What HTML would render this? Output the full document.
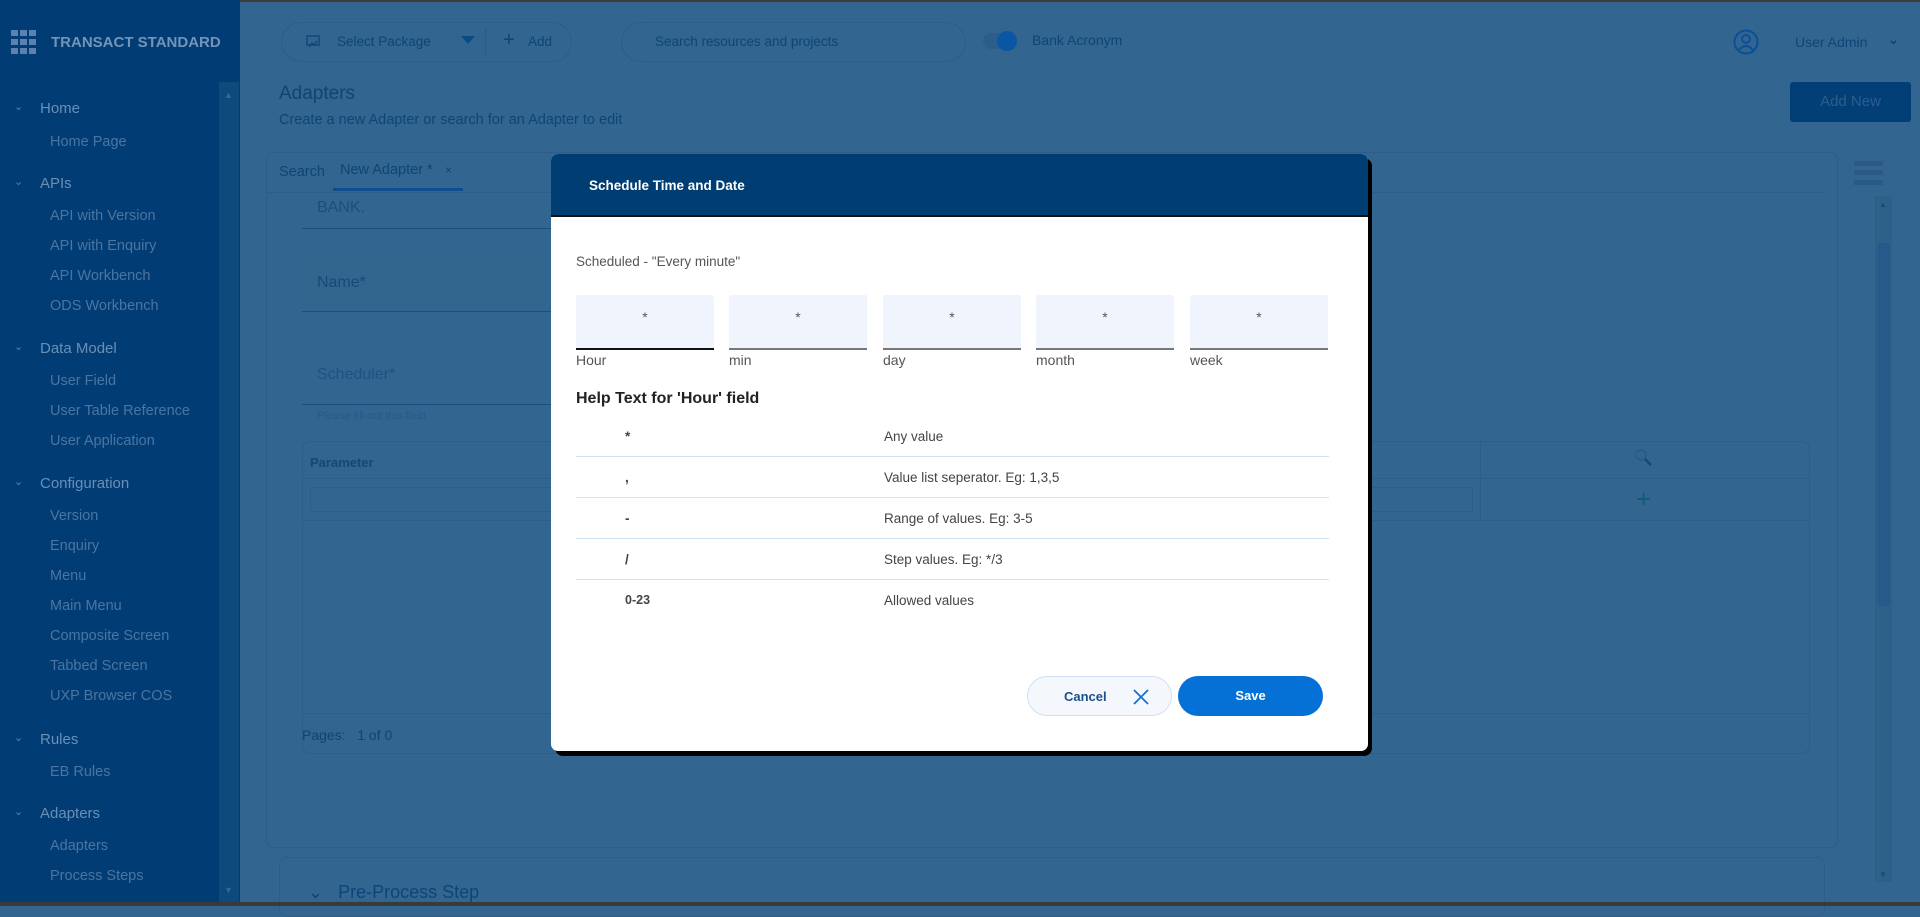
<!DOCTYPE html>
<html><head><meta charset="utf-8"><style>
*{box-sizing:border-box;margin:0;padding:0}
body{width:1920px;height:906px;overflow:hidden;background:#32658f;font-family:"Liberation Sans",sans-serif;position:relative}
.a{position:absolute;white-space:nowrap}
.sb{left:0;top:0;width:240px;height:902px;background:#013d74}
.sh{color:#6a8fb6;font-size:15px;left:40px}
.si{color:#4a75a2;font-size:14.5px;left:50px}
.chev{position:absolute;left:14px;color:#5a82ad;font-size:11px}
.dim{color:#0f4576}
.card{border:1px solid #2e5e88;border-radius:8px}
.inp{position:absolute;top:141px;width:138px;height:55px;background:#f0f5fd;border-bottom:2px solid #777;border-radius:2px 2px 0 0;text-align:center;font-size:14px;color:#555;padding-top:14px}
.lbl{position:absolute;top:198px;font-size:14px;color:#555}
.row{position:absolute;left:25px;width:753px;height:41px;border-bottom:1px solid #cfe3f5;font-size:13.5px;color:#444}
.row span{position:absolute;top:13px}
</style></head><body>
<div class="a" style="left:0;top:0;width:1920px;height:2px;background:#3d3d3d"></div>

<!-- sidebar -->
<div class="a sb"></div>
<div class="a" style="left:219px;top:82px;width:20px;height:820px;background:#0f4a7d"></div>
<div class="a" style="left:224px;top:90px;color:#3a6690;font-size:9px">▲</div>
<div class="a" style="left:224px;top:885px;color:#3a6690;font-size:9px">▼</div>
<svg class="a" style="left:11px;top:30px" width="26" height="26"><g fill="#5a82ad"><rect x="0" y="0" width="7" height="6"/><rect x="9" y="0" width="7" height="6"/><rect x="18" y="0" width="7" height="6"/><rect x="0" y="9" width="7" height="6"/><rect x="9" y="9" width="7" height="6"/><rect x="18" y="9" width="7" height="6"/><rect x="0" y="18" width="7" height="6"/><rect x="9" y="18" width="7" height="6"/><rect x="18" y="18" width="7" height="6"/></g></svg>
<div class="a" style="left:51px;top:34px;color:#7394b8;font-size:15px;font-weight:bold">TRANSACT STANDARD</div>

<div class="a sh" style="top:100px"><span class="chev" style="left:-26px">⌄</span>Home</div>
<div class="a si" style="top:134px">Home Page</div>
<div class="a sh" style="top:175px"><span class="chev" style="left:-26px">⌄</span>APIs</div>
<div class="a si" style="top:208px">API with Version</div>
<div class="a si" style="top:238px">API with Enquiry</div>
<div class="a si" style="top:268px">API Workbench</div>
<div class="a si" style="top:298px">ODS Workbench</div>
<div class="a sh" style="top:340px"><span class="chev" style="left:-26px">⌄</span>Data Model</div>
<div class="a si" style="top:373px">User Field</div>
<div class="a si" style="top:403px">User Table Reference</div>
<div class="a si" style="top:433px">User Application</div>
<div class="a sh" style="top:475px"><span class="chev" style="left:-26px">⌄</span>Configuration</div>
<div class="a si" style="top:508px">Version</div>
<div class="a si" style="top:538px">Enquiry</div>
<div class="a si" style="top:568px">Menu</div>
<div class="a si" style="top:598px">Main Menu</div>
<div class="a si" style="top:628px">Composite Screen</div>
<div class="a si" style="top:658px">Tabbed Screen</div>
<div class="a si" style="top:688px">UXP Browser COS</div>
<div class="a sh" style="top:731px"><span class="chev" style="left:-26px">⌄</span>Rules</div>
<div class="a si" style="top:764px">EB Rules</div>
<div class="a sh" style="top:805px"><span class="chev" style="left:-26px">⌄</span>Adapters</div>
<div class="a si" style="top:838px">Adapters</div>
<div class="a si" style="top:868px">Process Steps</div>

<!-- top bar -->
<div class="a card" style="left:281px;top:22px;width:291px;height:40px;border-radius:20px"></div>
<svg class="a" style="left:306px;top:35px" width="14" height="14"><rect x="1" y="1" width="12" height="9" fill="none" stroke="#14487a" stroke-width="1.5"/><path d="M3 12 L6 8 L8 10 L11 6" stroke="#14487a" fill="none" stroke-width="1.5"/></svg>
<div class="a dim" style="left:337px;top:34px;font-size:13.5px">Select Package</div>
<div class="a" style="left:461px;top:36px;width:0;height:0;border-left:7px solid transparent;border-right:7px solid transparent;border-top:8px solid #0a4a86"></div>
<div class="a" style="left:485px;top:28px;width:1px;height:28px;background:#2b5a84"></div>
<div class="a dim" style="left:503px;top:29px;font-size:20px">+</div>
<div class="a dim" style="left:528px;top:34px;font-size:13.5px">Add</div>
<div class="a card" style="left:621px;top:22px;width:345px;height:40px;border-radius:20px"></div>
<div class="a dim" style="left:655px;top:34px;font-size:13.5px">Search resources and projects</div>
<div class="a" style="left:983px;top:33px;width:32px;height:16px;border-radius:8px;background:#2c5e8a"></div>
<div class="a" style="left:997px;top:31px;width:20px;height:20px;border-radius:10px;background:#0b56a3"></div>
<div class="a dim" style="left:1032px;top:32px;font-size:14px">Bank Acronym</div>
<svg class="a" style="left:1733px;top:29px" width="26" height="26"><circle cx="13" cy="13" r="11.5" fill="none" stroke="#0a4f97" stroke-width="2"/><circle cx="13" cy="10" r="4" fill="none" stroke="#0a4f97" stroke-width="2"/><path d="M6 21 Q13 13 20 21" fill="none" stroke="#0a4f97" stroke-width="2"/></svg>
<div class="a dim" style="left:1795px;top:34px;font-size:14px">User Admin</div>
<div class="a dim" style="left:1888px;top:32px;font-size:13px;font-weight:bold">⌄</div>

<div class="a dim" style="left:279px;top:83px;font-size:19px">Adapters</div>
<div class="a dim" style="left:279px;top:112px;font-size:14.5px">Create a new Adapter or search for an Adapter to edit</div>
<div class="a" style="left:1790px;top:82px;width:121px;height:40px;background:#023f77;border-radius:3px;color:#2d5d8b;font-size:15px;text-align:center;line-height:40px">Add New</div>

<!-- main card -->
<div class="a card" style="left:266px;top:152px;width:1572px;height:696px"></div>
<div class="a" style="left:266px;top:192px;width:1560px;height:1px;background:#2e5e88"></div>
<div class="a dim" style="left:279px;top:164px;font-size:14.5px">Search</div>
<div class="a dim" style="left:340px;top:162px;font-size:14.5px">New Adapter *</div>
<div class="a dim" style="left:445px;top:163px;font-size:12px">×</div>
<div class="a" style="left:333px;top:188px;width:130px;height:3px;background:#0e4c8e"></div>
<div class="a" style="left:1854px;top:161px;width:29px;height:5px;background:#2b5a84"></div>
<div class="a" style="left:1854px;top:170px;width:29px;height:5px;background:#2b5a84"></div>
<div class="a" style="left:1854px;top:180px;width:29px;height:5px;background:#2b5a84"></div>
<div class="a" style="left:1875px;top:196px;width:17px;height:686px;background:#2f6087;border-left:1px solid #2e5e88"></div>
<div class="a" style="left:1878px;top:243px;width:12px;height:363px;background:#27598a"></div>
<div class="a" style="left:1879px;top:200px;color:#1c4a78;font-size:8px">▲</div>
<div class="a" style="left:1879px;top:870px;color:#1c4a78;font-size:8px">▼</div>

<div class="a dim" style="left:317px;top:199px;font-size:16px;color:#1c4f7f">BANK.</div>
<div class="a" style="left:302px;top:228px;width:300px;height:1px;background:#1b4f82"></div>
<div class="a" style="left:302px;top:258px;width:300px;height:54px;background:#33668f;border-bottom:1px solid #1b4f82"></div>
<div class="a" style="left:317px;top:274px;font-size:16px;color:#174a79">Name*</div>
<div class="a" style="left:302px;top:351px;width:300px;height:54px;border-bottom:1px solid #1b4f82"></div>
<div class="a" style="left:317px;top:366px;font-size:16px;color:#1e5384">Scheduler*</div>
<div class="a" style="left:317px;top:410px;font-size:11px;color:#275a88">Please fill out this field.</div>

<div class="a card" style="left:302px;top:441px;width:1508px;height:313px"></div>
<div class="a" style="left:310px;top:455px;font-size:13px;font-weight:bold;color:#164776">Parameter</div>
<div class="a" style="left:302px;top:478px;width:1508px;height:1px;background:#2e5e88"></div>
<div class="a" style="left:310px;top:487px;width:1163px;height:25px;border:1px solid #2e5e88"></div>
<div class="a" style="left:302px;top:520px;width:1508px;height:1px;background:#2e5e88"></div>
<div class="a" style="left:302px;top:713px;width:1508px;height:1px;background:#2e5e88"></div>
<div class="a" style="left:1480px;top:441px;width:1px;height:80px;background:#2e5e88"></div>
<svg class="a" style="left:1634px;top:448px" width="20" height="20"><circle cx="7" cy="7" r="5" fill="none" stroke="#2c5a87" stroke-width="1.5"/><path d="M11 11 L17 17" stroke="#26416c" stroke-width="2.5"/></svg>
<div class="a" style="left:1636px;top:484px;font-size:26px;color:#0f5c74">+</div>
<div class="a dim" style="left:302px;top:727px;font-size:14px">Pages:&nbsp;&nbsp;&nbsp;1 of 0</div>
<div class="a card" style="left:279px;top:857px;width:1546px;height:60px"></div>
<div class="a dim" style="left:308px;top:882px;font-size:18px">⌄&nbsp;&nbsp;&nbsp;Pre-Process Step</div>
<div class="a" style="left:0;top:902px;width:1920px;height:4px;background:#3a3a3a"></div>

<!-- modal -->
<div class="a" style="left:555px;top:158px;width:817px;height:598px;background:#000;border-radius:8px"></div>
<div class="a" style="left:551px;top:154px;width:817px;height:597px;background:#fff;border-radius:7px;overflow:hidden">
 <div style="position:absolute;left:0;top:0;width:100%;height:63px;background:#003d73;border-bottom:2px solid #111"></div>
 <div class="a" style="left:38px;top:24px;color:#fff;font-size:13.5px;font-weight:bold">Schedule Time and Date</div>
 <div class="a" style="left:25px;top:100px;font-size:13.5px;color:#555">Scheduled - "Every minute"</div>
 <div class="inp" style="left:25px;border-bottom-color:#111">*</div>
 <div class="inp" style="left:178px">*</div>
 <div class="inp" style="left:332px">*</div>
 <div class="inp" style="left:485px">*</div>
 <div class="inp" style="left:639px">*</div>
 <div class="lbl" style="left:25px">Hour</div>
 <div class="lbl" style="left:178px">min</div>
 <div class="lbl" style="left:332px">day</div>
 <div class="lbl" style="left:485px">month</div>
 <div class="lbl" style="left:639px">week</div>
 <div class="a" style="left:25px;top:236px;font-size:16px;font-weight:bold;color:#222">Help Text for 'Hour' field</div>
 <div class="row" style="top:262px"><span style="left:49px;font-weight:bold">*</span><span style="left:308px">Any value</span></div>
 <div class="row" style="top:303px"><span style="left:49px;font-weight:bold">,</span><span style="left:308px">Value list seperator. Eg: 1,3,5</span></div>
 <div class="row" style="top:344px"><span style="left:49px;font-weight:bold">-</span><span style="left:308px">Range of values. Eg: 3-5</span></div>
 <div class="row" style="top:385px"><span style="left:49px;font-weight:bold">/</span><span style="left:308px">Step values. Eg: */3</span></div>
 <div class="row" style="top:426px;border-bottom:none"><span style="left:49px;font-weight:bold;font-size:12.5px">0-23</span><span style="left:308px">Allowed values</span></div>
 <div class="a" style="left:476px;top:522px;width:145px;height:40px;border-radius:20px;background:#f4f8fd;border:1px solid #cfe0f3;color:#1c4f8a;font-size:13px;font-weight:bold;padding:12px 0 0 36px">Cancel</div>
 <svg class="a" style="left:582px;top:535px" width="16" height="16"><path d="M1 1 L15 15 M15 1 L1 15" stroke="#1a6fd0" stroke-width="1.8"/></svg>
 <div class="a" style="left:627px;top:522px;width:145px;height:40px;border-radius:20px;background:#0571d6;color:#fff;font-size:13px;font-weight:bold;text-align:center;line-height:40px">Save</div>
</div>
</body></html>
